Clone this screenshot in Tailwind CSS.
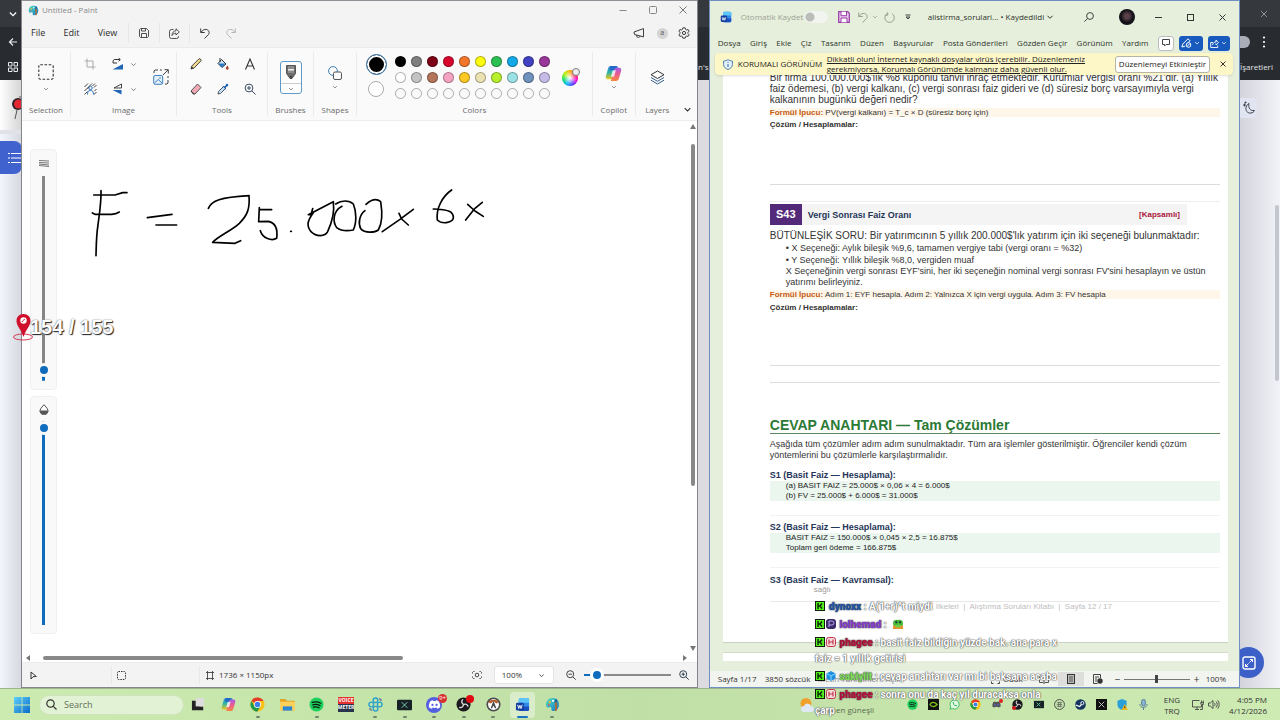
<!DOCTYPE html>
<html lang="tr">
<head>
<meta charset="utf-8">
<title>Untitled - Paint</title>
<script src="https://cdn.jsdelivr.net/npm/@tailwindcss/browser@4"></script>
</head>
<body class="h-screen flex flex-col overflow-hidden relative bg-[#f3f4f8] font-['Open_Sans','Noto_Sans',sans-serif] text-[8px] leading-[12px] text-[#3b3b3b]">

<svg class="absolute w-0 h-0" aria-hidden="true">
  <defs>
    <linearGradient id="gb" x1="0" y1="0" x2="1" y2="1"><stop offset="0" stop-color="#5fd0fa"/><stop offset="1" stop-color="#0a6cc9"/></linearGradient>
    <linearGradient id="gc1" x1="0" y1="0" x2="0" y2="1"><stop offset="0" stop-color="#2a7de1"/><stop offset=".5" stop-color="#2fb5a0"/><stop offset="1" stop-color="#f3c51c"/></linearGradient>
    <linearGradient id="gc2" x1="0" y1="0" x2="0" y2="1"><stop offset="0" stop-color="#a55be8"/><stop offset=".5" stop-color="#ee5a8b"/><stop offset="1" stop-color="#f48a3c"/></linearGradient>
    <linearGradient id="gp" x1="0" y1="0" x2="1" y2="1"><stop offset="0" stop-color="#4fe0b8"/><stop offset="1" stop-color="#1479cc"/></linearGradient>
    <symbol id="chev" viewBox="0 0 8 8"><path d="M1.5 2.8 4 5.3 6.5 2.8" fill="none" stroke="currentColor" stroke-width="1"/></symbol>
    <symbol id="copilot" viewBox="0 0 16 16"><path d="M5.5 1h5l-3.2 10.5c-.4 1.3-1 1.8-2.2 1.8H2.6C1 13.3.4 12 .8 10.600L3 3C3.500 1.600 4.200 1 5.500 1z" fill="url(#gc1)"/><path d="M10.500 15h-5l3.200-10.500c.4-1.300 1-1.800 2.200-1.800h2.500c1.600 0 2.200 1.300 1.800 2.700L13 13c-.5 1.400-1.200 2-2.500 2z" fill="url(#gc2)"/><path d="M7.200 5h3l-1.600 6h-3z" fill="#fff" opacity=".8"/><path d="M5.500 1h5c1.200 0 1.500.8 1.900 1.800-2.400-.4-3.300.4-3.900 2.200H4.200z" fill="#2468c8"/></symbol>
    <symbol id="word" viewBox="0 0 16 16"><rect x="4" y="1" width="11" height="14" rx="2" fill="#2f8bea"/><path d="M4 3a2 2 0 0 1 2-2h7a2 2 0 0 1 2 2v3H4z" fill="#5fc5f7"/><path d="M4 10h11v3a2 2 0 0 1-2 2H6a2 2 0 0 1-2-2z" fill="#1a4fc0"/><rect x="1" y="6" width="8.500" height="8.500" rx="1.500" fill="#123f9e"/><path d="m2.800 8.300 1.200 4 1.200-3.500 1.200 3.500 1.300-4" fill="none" stroke="#fff" stroke-width="1"/></symbol>
    <symbol id="paint" viewBox="0 0 16 16"><path d="M8 1C4 1 1 4 1 8c0 3 2 4 3.500 3 1.600-1 2.600 0 2.300 1.600C6.500 14.500 7.500 15 9 15c3.500 0 6-3.400 6-7.200C15 3.800 12 1 8 1z" fill="url(#gp)"/><circle cx="5" cy="5.500" r="1.200" fill="#ffb52e"/><circle cx="8.500" cy="4" r="1.200" fill="#fff"/><circle cx="4" cy="8.500" r="1" fill="#e8527a"/><path d="M10.500 5.500h2.500L12.700 15h-1.900z" fill="#a86b3c"/><path d="M10.300 5.500c0-2 .8-3 1.500-4 .8 1 1.400 2 1.400 4z" fill="#1b5e9e"/></symbol>
    <symbol id="chrome" viewBox="0 0 16 16"><circle cx="8" cy="8" r="7.500" fill="#fbc116"/><path d="M8 8 1.500 4.250A7.500 7.500 0 0 1 14.500 4.250L8 4.300z" fill="#e33b2e"/><path d="M1.500 4.250A7.500 7.500 0 0 0 8 15.500L11.200 9.900 4.800 9.900z" fill="#229a4c"/><circle cx="8" cy="8" r="3.700" fill="#fff"/><circle cx="8" cy="8" r="2.900" fill="#3f7de8"/></symbol>
    <symbol id="spotify" viewBox="0 0 16 16"><circle cx="8" cy="8" r="7.500" fill="#1ed05e"/><path d="M3.500 5.800c3-1 6.500-.7 9.200.8M4 8.400c2.600-.8 5.500-.5 7.800.8M4.500 10.800c2.200-.6 4.400-.4 6.300.7" fill="none" stroke="#0b1a10" stroke-width="1.300" stroke-linecap="round"/></symbol>
    <symbol id="discord" viewBox="0 0 16 16"><path d="M3.500 4.500C5 3.600 6 3.500 6.300 3.500l.4.700h2.600l.4-.7c.3 0 1.300.1 2.800 1 1.200 2 1.700 4.300 1.500 6.500-1 .9-2.200 1.300-3.200 1.500l-.7-1.200c-1.300.4-3 .4-4.200 0l-.7 1.200c-1-.2-2.200-.6-3.200-1.500-.2-2.200.3-4.500 1.500-6.500z" fill="currentColor"/><circle cx="5.800" cy="8.500" r="1.200" fill="#5560e0"/><circle cx="10.200" cy="8.500" r="1.200" fill="#5560e0"/></symbol>
    <symbol id="obs" viewBox="0 0 16 16"><circle cx="8" cy="8" r="7.500" fill="#1c1a1e"/><path d="M8 8c-2-1.500-2.500-3.500-1-5M8 8c2.300-.9 4.200-.2 4.700 1.800M8 8c-.3 2.500-2 3.700-4 3.200" fill="none" stroke="#d8d8d8" stroke-width="1.500" stroke-linecap="round"/></symbol>
    <symbol id="kick" viewBox="0 0 10 10"><rect width="10" height="10" fill="#101a10"/><rect x="1" y="1" width="8" height="8" fill="#53f01c"/><path d="M3 2v6M3 5h2M5 5l2-2.500M5 5l2 2.700" stroke="#0c200a" stroke-width="1.400" fill="none"/></symbol>
    <symbol id="ribbonbadge" viewBox="0 0 10 10"><rect x=".5" y=".5" width="9" height="9" rx="2" fill="#f8d9dc" stroke="#c0364a"/><path d="M3 2.500v5M7 2.500v5M3 5h4" stroke="#c0364a" stroke-width="1.200"/></symbol>
  </defs>
</svg>

<!-- Browser window behind everything -->
<div class="absolute inset-0 flex flex-col" aria-hidden="true">
  <div class="h-[27px] bg-[#35393e] flex items-center justify-between pl-2 pr-3 shrink-0">
    <svg class="w-[10px] h-[10px] text-white"><use href="#chev"/></svg>
    <svg class="w-[8px] h-[8px] text-[#8d9094]" viewBox="0 0 8 8"><path d="m1 1 6 6M7 1 1 7" stroke="currentColor" fill="none"/></svg>
  </div>
  <div class="h-[53px] bg-[#282c30] shrink-0 flex justify-between">
    <div class="w-[22px] flex flex-col items-center pl-1">
      <svg class="w-[10px] h-[10px] mt-[10px]" viewBox="0 0 10 10"><path d="M9 5H1.500M5 1.500 1.500 5 5 8.500" stroke="#e8eaed" stroke-width="1.200" fill="none"/></svg>
      <svg class="w-[10px] h-[10px] mt-[15px]" viewBox="0 0 10 10"><path d="M.5.500h3.500v3.500H.5zM6 .5h3.500v3.500H6zM.5 6h3.500v3.500H.5zM6 6h3.500v3.500H6z" stroke="#e8eaed" fill="none"/></svg>
    </div>
    <div class="flex-1 pl-[676px] pt-[34px] text-[#e3e5e8]">n's</div>
    <div class="w-[40px] text-[#e3e5e8] relative">
      <div class="absolute left-0 top-[9px] w-[10px] h-[12px] rounded-r-full bg-[#a9adb8]"></div>
      <svg class="absolute left-[22px] top-[8px] w-[4px] h-[14px]" viewBox="0 0 4 14"><circle cx="2" cy="2.500" r="1.100" fill="#fff"/><circle cx="2" cy="7" r="1.100" fill="#fff"/><circle cx="2" cy="11.500" r="1.100" fill="#fff"/></svg>
      <p class="absolute left-0 top-[34px]">İşaretleri</p>
    </div>
  </div>
  <div class="flex-1 flex justify-between bg-[#dcdce0]">
    <div class="w-[22px] bg-gradient-to-r from-[#f4f6fd] to-[#d5d7df] flex flex-col">
      <div class="h-[54px] bg-gradient-to-r from-white to-[#d4d4d4] border-b-4 border-[#e0e2e8] relative">
        <svg class="absolute left-[11px] top-[16px] w-[12px] h-[24px]" viewBox="0 0 12 24"><circle cx="7" cy="8" r="6" fill="#2d2428"/><circle cx="7.500" cy="8" r="4.500" fill="#e32634"/><path d="m6 14-2 9M9 2V0" stroke="#555"/></svg>
      </div>
      <div class="h-[33px] mt-[7px] bg-[#3f62ce] rounded-r-lg flex items-center justify-end pr-[1px]">
        <svg class="w-[13px] h-[12px]" viewBox="0 0 13 12"><path d="M0 1.500h2M3 1.500h10M0 6h2M3 6h10M0 10.500h2M3 10.500h10" stroke="#fff" stroke-width="1.100"/></svg>
      </div>
    </div>
    <div class="w-[40px] bg-gradient-to-r from-[#d4d5dc] to-[#f2f3f9] relative">
      <div class="absolute left-0 top-[18px] w-[17px] h-[20px] rounded-r bg-[#e1e5f2] flex items-center justify-center">
        <svg class="w-[14px] h-[14px]" viewBox="0 0 14 14"><path d="M7 2.500C6 7 8 10 12.500 9.500 11 12.500 7 13 4.800 10.500 3 8 4 4 7 2.500zM1 4h3M2.500 2.500v3M3.500 .5v2M2.500 1.500h2" stroke="#42454e" fill="none"/></svg>
      </div>
      <div class="absolute right-[1px] top-[125px] w-[4px] h-[176px] rounded bg-[#c3c5cf]"></div>
      <div class="absolute left-[-7px] top-[567px] w-[31px] h-[31px] rounded-full bg-[#3c60c8] flex items-center justify-center">
        <svg class="w-[14px] h-[14px]" viewBox="0 0 14 14"><rect x="1" y="1" width="12" height="12" rx="2" fill="none" stroke="#fff" stroke-width="1.400"/><path d="M8 3.500h2.500V6M6 10.500H3.500V8M10.500 3.500l-3 3M3.500 10.500l3-3" stroke="#fff" fill="none"/></svg>
      </div>
    </div>
  </div>
</div>

<!-- Windows side by side -->
<div class="relative flex-1 min-h-0 flex gap-[11px] pl-[21px] pr-[40px]">

  <!-- Paint -->
  <main class="flex-[677] min-w-0 flex flex-col border border-t-[#8f8f95] border-[#85858c] bg-[#f3f3f3]">
    <header class="h-[18px] flex items-center pl-[6px] pr-[10px] text-[#8a8a8a] shrink-0">
      <svg class="w-[11px] h-[11px] mr-[3px]"><use href="#paint"/></svg>
      <h1 class="flex-1">Untitled - Paint</h1>
      <div class="flex items-center gap-[22px]">
        <button aria-label="Minimize"><svg class="w-[8px] h-[8px]" viewBox="0 0 8 8"><path d="M.5 4.500h7" stroke="#888"/></svg></button>
        <button aria-label="Maximize"><svg class="w-[8px] h-[8px]" viewBox="0 0 8 8"><rect x=".5" y=".5" width="7" height="7" rx="1" fill="none" stroke="#888"/></svg></button>
        <button aria-label="Close"><svg class="w-[8px] h-[8px]" viewBox="0 0 8 8"><path d="m.5.500 7 7M7.500.500l-7 7" stroke="#777"/></svg></button>
      </div>
    </header>

    <nav class="h-[28px] flex items-center pl-[9px] pr-[7px] text-[9px] text-[#2b2b2b] shrink-0">
      <button class="w-[14px]">File</button>
      <button class="ml-[18px] w-[17px]">Edit</button>
      <button class="ml-[17px] w-[21px]">View</button>
      <span class="ml-[10px] w-px h-[20px] bg-[#e6e6e6]"></span>
      <button class="ml-[10px]" aria-label="Save"><svg class="w-[10px] h-[10px]" viewBox="0 0 10 10"><path d="M1.500.500h6l2 2v6l-1 1h-7l-1-1v-7zM2.500.500v2.500h4V.5M2.500 9.500V5.500h5v4" fill="none" stroke="#3c3c3c" stroke-width=".9"/></svg></button>
      <span class="ml-[10px] w-px h-[20px] bg-[#e6e6e6]"></span>
      <button class="ml-[9px]" aria-label="Share"><svg class="w-[11px] h-[11px]" viewBox="0 0 11 11"><path d="M4.500 1.500h-2a2 2 0 0 0-2 2v5a2 2 0 0 0 2 2h5a2 2 0 0 0 2-2V8M7 .8 10.300 4 7 7V5.200C5 5.200 3.800 6 3 7.500 3 4.800 4.500 3 7 2.700z" fill="none" stroke="#3c3c3c" stroke-width=".9"/></svg></button>
      <span class="ml-[9px] w-px h-[20px] bg-[#e6e6e6]"></span>
      <button class="ml-[10px]" aria-label="Undo"><svg class="w-[10px] h-[11px]" viewBox="0 0 10 11"><path d="M.7.500v4h4M.9 4.300C2.500 2.200 4.600 1 6.600 1.500c2.800.7 3.300 3.800 1.500 5.500L4.500 10.500" fill="none" stroke="#3c3c3c"/></svg></button>
      <button class="ml-[16px]" aria-label="Redo"><svg class="w-[10px] h-[11px] -scale-x-100" viewBox="0 0 10 11"><path d="M.7.500v4h4M.9 4.300C2.500 2.200 4.600 1 6.600 1.500c2.800.7 3.300 3.800 1.500 5.500L4.500 10.500" fill="none" stroke="#b5b5b5"/></svg></button>
      <span class="flex-1"></span>
      <button aria-label="Feedback"><svg class="w-[12px] h-[10px]" viewBox="0 0 12 10"><path d="M10.500.600v8.300L1.500 6.500 1 4zM3.500 7.200c0 1.500.7 2.200 1.800 2.200s1.700-.6 1.800-1.500" fill="none" stroke="#3c3c3c" stroke-linejoin="round"/></svg></button>
      <button class="ml-[12px] w-[11px] h-[11px] rounded-full bg-[#d4d4d4] text-[7px] leading-[10px] text-[#555]">a</button>
      <button class="ml-[10px]" aria-label="Settings"><svg class="w-[12px] h-[12px]" viewBox="0 0 12 12"><path d="M6 .8l1.200.1.400 1.500 1 .6 1.500-.5 1 1.700-1.100 1.100v1.300l1.100 1.100-1 1.700-1.500-.4-1 .6-.4 1.500H4.800l-.4-1.500-1-.6-1.500.4-1-1.700L2 6.600V5.300L.9 4.200l1-1.700 1.500.5 1-.6.400-1.500z" fill="none" stroke="#3c3c3c"/><circle cx="6" cy="6" r="1.600" fill="none" stroke="#3c3c3c"/></svg></button>
    </nav>

    <section class="h-[74px] flex bg-[#fafafa] border-t border-b border-[#ececec] text-[#6a6a6a] shrink-0 py-[4px]">
      <div class="w-[49px] flex flex-col items-center justify-between border-r border-[#ebebeb]">
        <button class="mt-[12px] flex flex-col items-center gap-[6px]" aria-label="Select"><svg class="w-[16px] h-[16px]" viewBox="0 0 16 16"><rect x=".8" y=".8" width="14.400" height="14.400" rx="1.500" fill="none" stroke="#333" stroke-width="1.100" stroke-dasharray="2.600 1.600"/></svg><svg class="w-[6px] h-[6px]"><use href="#chev"/></svg></button>
        <p>Selection</p>
      </div>
      <div class="w-[106px] flex flex-col items-center justify-between border-r border-[#ebebeb]">
        <div class="mt-[6px] pl-[6px] flex items-center gap-[16px]">
          <div class="grid grid-cols-[14px_auto] gap-x-[14px] gap-y-[13px] items-center">
            <button aria-label="Crop"><svg class="w-[12px] h-[12px]" viewBox="0 0 12 12"><path d="M3 .5v8.500h8.500M.5 3H9v8.500" fill="none" stroke="#aaa"/></svg></button>
            <button class="flex items-center gap-[6px]" aria-label="Rotate"><svg class="w-[12px] h-[12px]" viewBox="0 0 12 12"><path d="M11 6v5.500H.5z" fill="#1f66b5"/><path d="M1 5V4c0-1.500.7-2.500 2-2.500h5M6.500 0 8.300 1.600 6.500 3.300M1 5h4" fill="none" stroke="#333"/></svg><svg class="w-[7px] h-[7px]"><use href="#chev"/></svg></button>
            <button aria-label="Remove background"><svg class="w-[13px] h-[12px]" viewBox="0 0 13 12"><path d="M.5 4 4 .5M.5 8 8 .5M.5 11.500l3-3M8.500 3 11 .5M10 4.500l2.500-2.500M10.500 8l2-2M10 11.500l2.500-2.500M3.500 5.500l1.500-1.500" stroke="#444"/><path d="M3.500 11.500c0-3 1-4 3-4s3 1 3 4" fill="none" stroke="#2b6cb5"/><circle cx="6.500" cy="5" r="1.700" fill="none" stroke="#2b6cb5"/></svg></button>
            <button class="flex items-center gap-[6px]" aria-label="Flip"><svg class="w-[12px] h-[12px]" viewBox="0 0 12 12"><path d="M9.500 7v4.500L.5 7z" fill="#1f66b5"/><path d="M9.500 5V1L2 5z" fill="none" stroke="#444"/></svg><svg class="w-[7px] h-[7px]"><use href="#chev"/></svg></button>
          </div>
          <button aria-label="Resize"><svg class="w-[16px] h-[16px]" viewBox="0 0 16 16"><path d="M1 4V2l1-1h3M7 1h2M15 7v2M15 11v3l-1 1h-2M10 6l5-5M11.500.700h3.800v3.800" fill="none" stroke="#444"/><rect x=".7" y="6.500" width="9" height="8.800" rx="1.500" fill="#e6f1fb" stroke="#3b7fc0"/><path d="m1.500 14 3.700-3.500L9 14" fill="none" stroke="#3b7fc0"/><circle cx="7" cy="9" r=".8" fill="#3b7fc0"/></svg></button>
        </div>
        <p>Image</p>
      </div>
      <div class="w-[91px] flex flex-col items-center justify-between border-r border-[#ebebeb]">
        <div class="mt-[6px] pl-[2px] grid grid-cols-3 gap-x-[15px] gap-y-[13px]">
          <button aria-label="Pencil"><svg class="w-[12px] h-[12px]" viewBox="0 0 12 12"><path d="M1 11l.8-3L9 .8c1.200-.4 2.400.6 2 2L4 10.200z" fill="#f2d98d" stroke="#333" stroke-width=".9"/><path d="M1 11l.7-2.500L3.500 10z" fill="#333"/></svg></button>
          <button aria-label="Fill"><svg class="w-[12px] h-[12px]" viewBox="0 0 12 12"><path d="M4.500 1.500 9 6 5 9.500 1 5.500z" fill="#cfe3f5" stroke="#333"/><path d="M1 5.500h7.500L5 9.500z" fill="#2b78c2"/><path d="M3 0v4" stroke="#333"/><path d="M10.300 7.500c1 1.500 1.400 2 1.400 2.800a1.400 1.400 0 0 1-2.800 0c0-.8.500-1.300 1.400-2.800z" fill="#a5402a"/></svg></button>
          <button aria-label="Text"><svg class="w-[12px] h-[12px]" viewBox="0 0 12 12"><path d="M1.500 11.500 6 1l4.500 10.500M3 8h6" fill="none" stroke="#333" stroke-width="1.100"/></svg></button>
          <button aria-label="Eraser"><svg class="w-[12px] h-[12px]" viewBox="0 0 12 12"><path d="M1 8 7.500 1 11 4.500 5 11H3z" fill="#f3a9b6" stroke="#444" stroke-width=".9"/><path d="M1 8l3.500 3.200" stroke="#444"/></svg></button>
          <button aria-label="Color picker"><svg class="w-[12px] h-[12px]" viewBox="0 0 12 12"><path d="M1 11l.5-2.500L6.500 3.500l2 2-5 5z" fill="#bfe0fa" stroke="#333" stroke-width=".8"/><path d="M5.500 3 8 3.200 9.300 1c1.200-.8 2.500.4 1.800 1.700L8.800 4.500 9 6.700z" fill="#1e63b0"/></svg></button>
          <button aria-label="Magnifier"><svg class="w-[12px] h-[12px]" viewBox="0 0 12 12"><circle cx="5" cy="5" r="3.900" fill="none" stroke="#3a4d66"/><path d="m8 8 3.500 3.500M5 3v4M3 5h4" stroke="#3a4d66"/></svg></button>
        </div>
        <p>Tools</p>
      </div>
      <div class="w-[46px] flex flex-col items-center justify-between border-r border-[#ebebeb]">
        <button class="mt-[9px] w-[22px] h-[33px] rounded-[3px] border border-[#5b9acb] flex flex-col items-center justify-between pt-[3px] bg-[#fdfdfd]" aria-label="Brushes">
          <svg class="w-[10px] h-[15px]" viewBox="0 0 10 15"><path d="M.5.500h9v8L6 13.500H4L.5 8.500z" fill="#6b6b6b" stroke="#555"/><path d="M2 1v7h6V1z" fill="#8d8d8d"/><path d="M2 4h6v1.500H2z" fill="#eee"/><path d="M4.200 11h1.600L5 14.500z" fill="#222"/></svg>
          <span class="w-full border-t border-[#ccc] h-[10px] flex justify-center items-center"><svg class="w-[6px] h-[6px]"><use href="#chev"/></svg></span>
        </button>
        <p>Brushes</p>
      </div>
      <div class="w-[43px] flex flex-col items-center justify-between border-r border-[#ebebeb]">
        <button class="mt-[14px] flex flex-col items-center gap-[4px]" aria-label="Shapes"><svg class="w-[14px] h-[14px]" viewBox="0 0 14 14"><circle cx="5" cy="5" r="4.400" fill="none" stroke="#3b7fb5"/><rect x="5.500" y="6" width="8" height="7.500" rx="1.500" fill="#fafafa" stroke="#555"/></svg><svg class="w-[6px] h-[6px]"><use href="#chev"/></svg></button>
        <p>Shapes</p>
      </div>
      <div class="flex-1 min-w-0 flex flex-col items-center justify-between border-r border-[#ebebeb]">
        <div class="mt-[2px] pr-[3px] flex items-start">
          <div class="flex flex-col items-center gap-[6px]">
            <button class="w-[21px] h-[21px] rounded-full border border-[#3f7fb4] bg-black shadow-[inset_0_0_0_2px_white]" aria-label="Color 1"></button>
            <button class="w-[16px] h-[16px] rounded-full border border-[#aaa] bg-white" aria-label="Color 2"></button>
          </div>
          <div class="ml-[8px] mt-[2px] grid grid-cols-10 gap-[5px] *:size-[11px] *:rounded-full *:border *:border-black/30">
            <button class="bg-black" aria-label="Black"></button><button class="bg-[#7f7f7f]" aria-label="Gray"></button><button class="bg-[#7b0016]" aria-label="Dark red"></button><button class="bg-[#d8052c]" aria-label="Red"></button><button class="bg-[#f2762a]" aria-label="Orange"></button><button class="bg-[#fdfb10]" aria-label="Yellow"></button><button class="bg-[#2cc052]" aria-label="Green"></button><button class="bg-[#12a9e6]" aria-label="Turquoise"></button><button class="bg-[#4141c2]" aria-label="Indigo"></button><button class="bg-[#993699]" aria-label="Purple"></button>
            <button class="bg-white" aria-label="White"></button><button class="bg-[#c3c3c3]" aria-label="Light gray"></button><button class="bg-[#b3745a]" aria-label="Brown"></button><button class="bg-[#f5a3c3]" aria-label="Rose"></button><button class="bg-[#fcc823]" aria-label="Gold"></button><button class="bg-[#ebe3b2]" aria-label="Light yellow"></button><button class="bg-[#b7ef2b]" aria-label="Lime"></button><button class="bg-[#9be2e6]" aria-label="Light turquoise"></button><button class="bg-[#6f91bd]" aria-label="Blue gray"></button><button class="bg-[#c5bbe6]" aria-label="Lavender"></button>
            <button aria-label="Custom 1"></button><button aria-label="Custom 2"></button><button aria-label="Custom 3"></button><button aria-label="Custom 4"></button><button aria-label="Custom 5"></button><button aria-label="Custom 6"></button><button aria-label="Custom 7"></button><button aria-label="Custom 8"></button><button aria-label="Custom 9"></button><button aria-label="Custom 10"></button>
          </div>
          <button class="ml-[12px] mt-[14px] w-[18px] h-[18px] relative" aria-label="Edit colors">
            <span class="absolute left-0 bottom-0 w-[16px] h-[16px] rounded-full bg-[radial-gradient(circle,white,transparent_65%),conic-gradient(#ffb000,#ff2020,#ff00d0,#5030ff,#00b0ff,#00e060,#b0f000,#ffb000)]"></span>
            <span class="absolute right-0 top-0 w-[8px] h-[8px] rounded-full border border-[#777] bg-[#eee]"></span>
          </button>
        </div>
        <p>Colors</p>
      </div>
      <div class="w-[43px] flex flex-col items-center justify-between border-r border-[#ebebeb]">
        <button class="mt-[13px] flex flex-col items-center gap-[2px]" aria-label="Copilot"><svg class="w-[17px] h-[17px]"><use href="#copilot"/></svg><svg class="w-[6px] h-[6px]"><use href="#chev"/></svg></button>
        <p>Copilot</p>
      </div>
      <div class="w-[43px] flex flex-col items-center justify-between">
        <button class="mt-[18px]" aria-label="Layers"><svg class="w-[15px] h-[15px]" viewBox="0 0 15 15"><path d="M7.500 1 14 4.700 7.500 8.500 1 4.700z" fill="#fff" stroke="#333" stroke-linejoin="round"/><path d="m1 7.500 6.500 3.800L14 7.500M1 10.200 7.500 14 14 10.200" fill="none" stroke="#34608f" stroke-linejoin="round"/></svg></button>
        <p>Layers</p>
      </div>
      <button class="w-[18px] self-end pb-[2px] flex justify-center text-[#333]" aria-label="Collapse ribbon"><svg class="w-[9px] h-[9px]"><use href="#chev"/></svg></button>
    </section>

    <div class="flex-1 min-h-0 flex bg-white">
      <div class="w-[35px] pl-[8px] pt-[28px] pb-[20px] flex flex-col gap-[6px] shrink-0">
        <div class="flex-1 w-[27px] rounded-[4px] border border-[#f0f0f0] bg-[#f9f9f9] flex flex-col items-center pt-[9px] pb-[8px]">
          <svg class="w-[10px] h-[8px] shrink-0" viewBox="0 0 10 8"><path d="M0 1.500l10 .5M0 3.500l10 .5M0 5l10 1M0 6.500l10 1" stroke="#555" stroke-width=".8"/></svg>
          <input type="range" min="0" max="100" value="2" aria-label="Brush size" class="mt-[9px] flex-1 min-h-0 w-[14px] appearance-none [writing-mode:vertical-lr] [direction:rtl] bg-[linear-gradient(#858585_97%,#0f6cbd_97%)] bg-[length:3px_100%] bg-center bg-no-repeat [&::-webkit-slider-thumb]:appearance-none [&::-webkit-slider-thumb]:w-[14px] [&::-webkit-slider-thumb]:h-[14px] [&::-webkit-slider-thumb]:rounded-full [&::-webkit-slider-thumb]:border-[3px] [&::-webkit-slider-thumb]:border-[#f9f9f9] [&::-webkit-slider-thumb]:bg-[#0f6cbd]">
        </div>
        <div class="flex-1 w-[27px] rounded-[4px] border border-[#f0f0f0] bg-[#f9f9f9] flex flex-col items-center pt-[7px] pb-[8px]">
          <svg class="w-[10px] h-[11px] shrink-0" viewBox="0 0 10 11"><path d="M5 .7 8 4.200a4 4 0 1 1-6 0z" fill="#fff" stroke="#555"/><path d="M1 6.500h8a4 4 0 0 1-8 0z" fill="#555"/></svg>
          <input type="range" min="0" max="100" value="100" aria-label="Opacity" class="mt-[6px] flex-1 min-h-0 w-[14px] appearance-none [writing-mode:vertical-lr] [direction:rtl] bg-[linear-gradient(#0f6cbd,#0f6cbd)] bg-[length:3px_100%] bg-center bg-no-repeat [&::-webkit-slider-thumb]:appearance-none [&::-webkit-slider-thumb]:w-[14px] [&::-webkit-slider-thumb]:h-[14px] [&::-webkit-slider-thumb]:rounded-full [&::-webkit-slider-thumb]:border-[3px] [&::-webkit-slider-thumb]:border-[#f9f9f9] [&::-webkit-slider-thumb]:bg-[#0f6cbd]">
        </div>
      </div>
      <div class="flex-1 min-w-0 overflow-hidden">
        <svg class="w-[600px] h-[180px]" viewBox="57 121 600 180" role="img" aria-label="F = 25.000 x 6 x">
          <g fill="none" stroke="#000" stroke-width="5" stroke-linecap="round" stroke-linejoin="round">
            <g transform="translate(0 130) scale(.3333)">
              <path d="M303 182C304 220 298 250 294 285C289 315 289 340 288 377M281 195H345L368 188L381 188M277 249L285 253H335L347 251L358 246M442 263L516 253M468 285H530"/>
            </g>
            <g transform="translate(200 170) scale(.3333)">
              <path d="M25 115C35 92 60 82 147 77C150 115 143 135 118 160C95 182 55 198 38 217L105 220L122 212"/>
              <path d="M215 119H178V113L176 155L205 154C225 158 234 175 230 205C215 214 188 205 181 182M272 184h2"/>
              <path d="M338 116L333 134L325 134L400 95C404 125 397 155 383 185C375 200 350 202 333 185C320 168 320 155 340 128"/>
              <path d="M426 109C398 124 398 155 410 173C425 184 445 183 460 180C470 160 470 125 460 102C447 90 425 90 407 102"/>
              <path d="M495 122C478 135 474 160 482 176C495 191 525 188 535 180C547 160 547 125 542 95C530 85 515 88 498 103"/>
              <path d="M547 185L600 148L640 118M597 130L605 147L625 165M755 60C725 80 708 118 712 150C725 163 755 160 760 145C762 125 745 118 700 117M797 150L825 115L847 97M803 103L825 123L850 139"/>
            </g>
          </g>
        </svg>
      </div>
      <div class="w-[7px] flex flex-col items-center py-[3px] shrink-0">
        <svg class="w-[6px] h-[5px]" viewBox="0 0 6 5"><path d="M3 0l3 5H0z" fill="#777"/></svg>
        <div class="mt-[15px] w-[4px] h-[342px] rounded bg-[#888]"></div>
        <div class="flex-1"></div>
        <svg class="w-[6px] h-[5px]" viewBox="0 0 6 5"><path d="M3 5l3-5H0z" fill="#777"/></svg>
      </div>
    </div>
    <div class="h-[8px] flex items-center bg-white px-[4px] shrink-0">
      <svg class="w-[4px] h-[6px]" viewBox="0 0 4 6"><path d="M0 3l4-3v6z" fill="#777"/></svg>
      <div class="ml-[13px] w-[54%] h-[4px] rounded bg-[#888]"></div>
      <div class="flex-1"></div>
      <svg class="w-[4px] h-[6px] mr-[6px]" viewBox="0 0 4 6"><path d="M4 3L0 0v6z" fill="#777"/></svg>
    </div>
    <footer class="h-[25px] flex items-center pl-[8px] pr-[8px] bg-[#f3f3f3] border-t border-[#ececec] shrink-0">
      <svg class="w-[7px] h-[9px]" viewBox="0 0 7 9"><path d="M1 1v7l2-2.300 3.300-.2z" fill="none" stroke="#333"/></svg>
      <span class="ml-[74px] w-px h-[18px] bg-[#e8e8e8]"></span>
      <svg class="ml-[5px] w-[9px] h-[9px]" viewBox="0 0 9 9"><rect x=".5" y=".5" width="8" height="8" rx="1" fill="none" stroke="#333" stroke-dasharray="1.500 1"/></svg>
      <span class="ml-[73px] w-px h-[18px] bg-[#e8e8e8]"></span>
      <svg class="ml-[6px] w-[8px] h-[9px]" viewBox="0 0 8 9"><path d="M1.500 0v9M6.500 0v9M0 1.500h8M0 7.500h8" stroke="#444" fill="none" stroke-width=".9"/></svg>
      <p class="ml-[5px] text-[#333]">1736 × 1150px</p>
      <span class="flex-1"></span>
      <button aria-label="Fit to window"><svg class="w-[10px] h-[8px]" viewBox="0 0 10 8"><path d="M.5 2.500v-1l1-1h1M7.500.500h1l1 1v1M9.500 5.500v1l-1 1h-1M2.500 7.500h-1l-1-1v-1" fill="none" stroke="#444"/><circle cx="5" cy="4" r="1.800" fill="none" stroke="#444"/></svg></button>
      <div class="relative ml-[12px] flex items-center">
        <select aria-label="Zoom" class="appearance-none w-[60px] h-[18px] rounded-[3px] border border-[#e4e4e4] bg-white pl-[7px] text-[8px] text-[#333]"><option>100%</option></select>
        <svg class="absolute right-[9px] w-[7px] h-[7px] pointer-events-none"><use href="#chev"/></svg>
      </div>
      <button class="ml-[12px]" aria-label="Zoom out"><svg class="w-[10px] h-[10px]" viewBox="0 0 10 10"><circle cx="4.200" cy="4.200" r="3.500" fill="none" stroke="#444"/><path d="m7 7 2.700 2.700M2.500 4.200h3.400" stroke="#444"/></svg></button>
      <input type="range" min="0" max="100" value="8" aria-label="Zoom level" class="ml-[8px] w-[87px] h-[14px] appearance-none bg-[linear-gradient(90deg,#0f6cbd_10%,#8a8a8a_10%)] bg-[length:100%_2px] bg-center bg-no-repeat [&::-webkit-slider-thumb]:appearance-none [&::-webkit-slider-thumb]:w-[14px] [&::-webkit-slider-thumb]:h-[14px] [&::-webkit-slider-thumb]:rounded-full [&::-webkit-slider-thumb]:border-[3px] [&::-webkit-slider-thumb]:border-white [&::-webkit-slider-thumb]:bg-[#0f6cbd]">
      <button class="ml-[8px]" aria-label="Zoom in"><svg class="w-[10px] h-[10px]" viewBox="0 0 10 10"><circle cx="4.200" cy="4.200" r="3.500" fill="none" stroke="#345"/><path d="m7 7 2.700 2.700M2.500 4.200h3.400M4.200 2.500v3.400" stroke="#345"/></svg></button>
    </footer>
  </main>

  <!-- Word -->
  <article class="flex-[531] min-w-0 flex flex-col border border-[#6f8fc0] bg-[#e5efdb]">
    <header class="h-[32px] flex items-center pl-[10px] pr-[13px] shrink-0">
      <svg class="w-[12px] h-[12px]"><use href="#word"/></svg>
      <label class="ml-[9px] flex items-center text-[#9da298] whitespace-nowrap"><span class="w-[57px]">Otomatik Kaydet</span>
        <input type="checkbox" role="switch" class="ml-[6px] appearance-none w-[24px] h-[12px] rounded-full bg-[#f2f4ef] bg-[radial-gradient(circle_at_6px_6px,#bbbdb8_4px,transparent_5px)]"></label>
      <button class="ml-[10px]" aria-label="Kaydet"><svg class="w-[12px] h-[12px]" viewBox="0 0 12 12"><path d="M.700.700h9l1.600 1.600v9H.700z" fill="#e9c8ee" stroke="#9a3ba8" stroke-width="1.200"/><path d="M3 .7v4h5.500v-4M3 11.300V7h6v4.300" fill="#fff" stroke="#9a3ba8"/></svg></button>
      <button class="ml-[8px] flex items-center gap-[4px] text-[#98a092]" aria-label="Geri al"><svg class="w-[10px] h-[11px]" viewBox="0 0 10 11"><path d="M.7.500v4h4M.9 4.300C2.500 2.200 4.600 1 6.600 1.500c2.800.7 3.300 3.800 1.500 5.500L4.500 10.500" fill="none" stroke="#98a092"/></svg><svg class="w-[6px] h-[6px]"><use href="#chev"/></svg></button>
      <button class="ml-[6px]" aria-label="Yinele"><svg class="w-[11px] h-[11px]" viewBox="0 0 11 11"><path d="M3.500 1.500A4.700 4.700 0 1 0 8 1.700M3.700.200v3H.800" fill="none" stroke="#98a092"/></svg></button>
      <button class="ml-[10px]" aria-label="Özelleştir"><svg class="w-[6px] h-[6px]" viewBox="0 0 6 6"><path d="M.5 1h5M1 3l2 2 2-2z" stroke="#444" fill="none"/></svg></button>
      <button class="ml-[17px] flex items-center gap-[2px] text-[#2f332c] whitespace-nowrap"><span>alistirma_sorulari... • Kaydedildi</span><svg class="w-[8px] h-[8px]"><use href="#chev"/></svg></button>
      <span class="flex-1"></span>
      <button aria-label="Ara"><svg class="w-[10px] h-[10px]" viewBox="0 0 10 10"><circle cx="6" cy="4" r="3.400" fill="none" stroke="#444"/><path d="M3.500 6.500.3 9.700" stroke="#444"/></svg></button>
      <button class="ml-[25px] w-[16px] h-[16px] rounded-full bg-[radial-gradient(circle_at_50%_45%,#5a4048_20%,#15131a_50%)]" aria-label="Hesap"></button>
      <button class="ml-[20px]" aria-label="Simge durumuna küçült"><svg class="w-[7px] h-[7px]" viewBox="0 0 7 7"><path d="M0 3.500h7" stroke="#333"/></svg></button>
      <button class="ml-[25px]" aria-label="Ekranı kapla"><svg class="w-[7px] h-[7px]" viewBox="0 0 7 7"><rect x=".5" y=".5" width="6" height="6" fill="none" stroke="#333"/></svg></button>
      <button class="ml-[25px]" aria-label="Kapat"><svg class="w-[7px] h-[7px]" viewBox="0 0 7 7"><path d="m.5.500 6 6M6.500.500l-6 6" stroke="#333"/></svg></button>
    </header>
    <nav class="h-[20px] flex items-center justify-between pl-[8px] pr-[9px] text-[#2f332c] whitespace-nowrap shrink-0">
      <button>Dosya</button><button>Giriş</button><button>Ekle</button><button>Çiz</button><button>Tasarım</button><button>Düzen</button><button>Başvurular</button><button>Posta Gönderileri</button><button>Gözden Geçir</button><button>Görünüm</button><button>Yardım</button>
      <span class="flex gap-[5px]">
        <button class="w-[16px] h-[15px] rounded-[3px] border border-[#bbb] bg-white flex items-center justify-center" aria-label="Açıklamalar"><svg class="w-[8px] h-[8px]" viewBox="0 0 8 8"><path d="M.5.500h7v5H4L2.500 7V5.500h-2z" fill="none" stroke="#444"/></svg></button>
        <button class="w-[24px] h-[15px] rounded-[3px] bg-[#185abd] text-white flex items-center justify-center gap-[2px]" aria-label="Görüntüleme"><svg class="w-[11px] h-[10px]" viewBox="0 0 11 10"><path d="m.8 9 1-3L7 .800l2 2-2 2M1 9l3-.8" fill="none" stroke="#fff"/><circle cx="7.500" cy="7" r="2.300" fill="none" stroke="#fff"/><path d="m6 8.500 3-3" stroke="#fff"/></svg><svg class="w-[6px] h-[6px]"><use href="#chev"/></svg></button>
        <button class="w-[22px] h-[15px] rounded-[3px] bg-[#185abd] text-white flex items-center justify-center gap-[2px]" aria-label="Paylaş"><svg class="w-[9px] h-[9px]" viewBox="0 0 9 9"><path d="M3 3.500H.700v5h7v-2M2.500 6C3 4 4 3 6 3V1l2.500 2.700L6 6V4.500" fill="none" stroke="#fff" stroke-width=".9"/></svg><svg class="w-[6px] h-[6px]"><use href="#chev"/></svg></button>
      </span>
    </nav>
    <div class="h-[22px] ml-[5px] mr-[6px] rounded-[4px] bg-[#fdf7c8] shadow-sm flex items-center pl-[8px] pr-[7px] text-[#222] shrink-0 whitespace-nowrap z-10">
      <svg class="w-[10px] h-[11px]" viewBox="0 0 10 11"><path d="M5 .6C6.300 1.600 7.800 2 9.400 2v3.500c0 2.300-1.700 4-4.400 5-2.700-1-4.400-2.700-4.400-5V2C2.200 2 3.700 1.600 5 .6z" fill="#e6f1fb" stroke="#4a84b8"/><path d="M5 3v1M5 5v3" stroke="#2d6aa6"/></svg>
      <strong class="ml-[5px] w-[83px] font-normal">KORUMALI GÖRÜNÜM</strong>
      <a href="#" class="ml-[6px] underline leading-[10px]">Dikkatli olun! İnternet kaynaklı dosyalar virüs içerebilir. Düzenlemeniz<br>gerekmiyorsa, Korumalı Görünümde kalmanız daha güvenli olur.</a>
      <span class="flex-1"></span>
      <button class="w-[95px] h-[17px] rounded-[3px] border border-[#b5b5a5] bg-white">Düzenlemeyi Etkinleştir</button>
      <button class="ml-[10px]" aria-label="Kapat"><svg class="w-[6px] h-[6px]" viewBox="0 0 6 6"><path d="m.5.500 5 5M5.500.500l-5 5" stroke="#333"/></svg></button>
    </div>

    <div class="flex-1 min-h-0 flex flex-col pl-[13px] pr-[11px] overflow-hidden">
      <div class="h-[568px] shrink-0 bg-white border-b border-[#c9d2c0] pl-[47px] pr-[8px] font-['Liberation_Sans',Arial,sans-serif] text-[#333] text-[8px] whitespace-nowrap overflow-hidden">
        <p class="-mt-[3px] text-[10px] leading-[11px]">Bir firma 100.000.000$'lık %8 kuponlu tahvil ihraç etmektedir. Kurumlar vergisi oranı %21'dir. (a) Yıllık<br>faiz ödemesi, (b) vergi kalkanı, (c) vergi sonrası faiz gideri ve (d) süresiz borç varsayımıyla vergi<br>kalkanının bugünkü değeri nedir?</p>
        <p class="mt-[3px] leading-[9px] bg-[#fef6e9]"><b class="text-[#c55a11]">Formül İpucu:</b> PV(vergi kalkanı) = T_c × D (süresiz borç için)</p>
        <p class="mt-[3px] leading-[9px] font-bold">Çözüm / Hesaplamalar:</p>
        <hr class="mt-[55px] border-[#dcdcdc]">
        <hr class="mt-[16px] border-[#eeeeee]">
        <div class="mt-[2px] mr-[33px] h-[21px] flex items-center bg-[#f4f4f5]">
          <b class="w-[32px] self-stretch bg-[#532a7a] text-white text-[11px] leading-[21px] text-center">S43</b>
          <h2 class="ml-[6px] flex-1 font-bold text-[9px] text-[#1f3658]">Vergi Sonrası Faiz Oranı</h2>
          <b class="mr-[7px] text-[#a8153a]">[Kapsamlı]</b>
        </div>
        <p class="mt-[5px] text-[10px] leading-[12px]">BÜTÜNLEŞİK SORU: Bir yatırımcının 5 yıllık 200.000$'lık yatırım için iki seçeneği bulunmaktadır:</p>
        <ul class="ml-[16px] text-[9px] leading-[12px]"><li>• X Seçeneği: Aylık bileşik %9,6, tamamen vergiye tabi (vergi oranı = %32)</li><li>• Y Seçeneği: Yıllık bileşik %8,0, vergiden muaf</li></ul>
        <p class="ml-[16px] text-[9px] leading-[11px]">X Seçeneğinin vergi sonrası EYF'sini, her iki seçeneğin nominal vergi sonrası FV'sini hesaplayın ve üstün<br>yatırımı belirleyiniz.</p>
        <p class="mt-[2px] leading-[9px] bg-[#fef6e9]"><b class="text-[#c55a11]">Formül İpucu:</b> Adım 1: EYF hesapla. Adım 2: Yalnızca X için vergi uygula. Adım 3: FV hesapla</p>
        <p class="mt-[4px] leading-[9px] font-bold">Çözüm / Hesaplamalar:</p>
        <hr class="mt-[53px] border-[#dcdcdc]">
        <hr class="mt-[16px] border-[#dcdcdc]">
        <h2 class="mt-[34px] text-[14px] leading-[16px] font-bold text-[#2b7a35] border-b border-[#5c8a60]">CEVAP ANAHTARI — Tam Çözümler</h2>
        <p class="mt-[5px] text-[9px] leading-[11px]">Aşağıda tüm çözümler adım adım sunulmaktadır. Tüm ara işlemler gösterilmiştir. Öğrenciler kendi çözüm<br>yöntemlerini bu çözümlerle karşılaştırmalıdır.</p>
        <h3 class="mt-[8px] text-[9px] leading-[12px] font-bold text-[#1f3658]">S1 (Basit Faiz — Hesaplama):</h3>
        <p class="pl-[16px] leading-[10px] bg-[#eaf6ee] text-[#222]">(a) BASIT FAIZ = 25.000$ × 0,06 × 4 = 6.000$<br>(b) FV = 25.000$ + 6.000$ = 31.000$</p>
        <hr class="mt-[14px] border-[#f3f3f3]">
        <h3 class="mt-[5px] text-[9px] leading-[12px] font-bold text-[#1f3658]">S2 (Basit Faiz — Hesaplama):</h3>
        <p class="pl-[16px] leading-[10px] bg-[#eaf6ee] text-[#222]">BASIT FAIZ = 150.000$ × 0,045 × 2,5 = 16.875$<br>Toplam geri ödeme = 166.875$</p>
        <hr class="mt-[14px] border-[#f3f3f3]">
        <h3 class="mt-[6px] text-[9px] leading-[12px] font-bold text-[#1f3658]">S3 (Basit Faiz — Kavramsal):</h3>
        <p class="pl-[44px] leading-[8px] text-[#999]">sağlı</p>
        <hr class="mt-[7px] border-[#e8e8e8]">
        <p class="pr-[108px] text-right leading-[10px] text-[#bdbdbd]">İlkeleri &nbsp;|&nbsp; Alıştırma Soruları Kitabı &nbsp;|&nbsp; Sayfa 12 / 17</p>
      </div>
      <div class="mt-[9px] h-[9px] shrink-0 bg-white border-t border-[#d3dbcb]"></div>
    </div>
    <footer class="h-[16px] flex items-center pl-[8px] pr-[13px] bg-[#f2f4f0] text-[#333] whitespace-nowrap shrink-0">
      <span class="w-[47px]">Sayfa 1/17</span><span class="w-[53px]">3850 sözcük</span><span class="text-[#888]">Metin Tahminleri: Açık</span>
      <span class="flex-1"></span>
      <button class="flex items-center gap-[3px]"><svg class="w-[9px] h-[9px]" viewBox="0 0 9 9"><path d="M.5 2.500v-2h2M6.500.500h2v2M8.500 6.500v2h-2M2.500 8.500h-2v-2" fill="none" stroke="#444"/></svg>Odak</button>
      <button class="ml-[16px]" aria-label="Okuma modu"><svg class="w-[10px] h-[9px]" viewBox="0 0 10 9"><path d="M5 1.500v7M.5.500H4l1 1 1-1h3.500v7H6l-1 1-1-1H.5z" fill="none" stroke="#555"/></svg></button>
      <button class="ml-[9px] w-[26px] h-[14px] bg-[#dedfdc] flex items-center justify-center" aria-label="Sayfa düzeni"><svg class="w-[8px] h-[10px]" viewBox="0 0 8 10"><rect x=".5" y=".5" width="7" height="9" fill="#bbb" stroke="#333"/><path d="M2 3h4M2 5h4M2 7h4" stroke="#555"/></svg></button>
      <button class="ml-[9px]" aria-label="Web düzeni"><svg class="w-[10px] h-[10px]" viewBox="0 0 10 10"><path d="M7.500 4V.500h-7v9h4M2 3h4M2 5h2M2 7h2" fill="none" stroke="#444"/><circle cx="7" cy="7" r="2.700" fill="#333"/></svg></button>
      <button class="ml-[12px] w-[6px] text-[10px]" aria-label="Uzaklaştır">−</button>
      <input type="range" min="0" max="100" value="50" aria-label="Yakınlaştırma" class="ml-[3px] w-[66px] h-[9px] appearance-none bg-[linear-gradient(#777,#777)] bg-[length:100%_1px] bg-center bg-no-repeat [&::-webkit-slider-thumb]:appearance-none [&::-webkit-slider-thumb]:w-[3px] [&::-webkit-slider-thumb]:h-[8px] [&::-webkit-slider-thumb]:bg-[#444]">
      <button class="ml-[4px] w-[6px] text-[10px]" aria-label="Yakınlaştır">+</button>
      <span class="ml-[6px]">100%</span>
    </footer>
  </article>
</div>

<!-- Taskbar -->
<footer class="relative h-[32px] shrink-0 flex items-center pl-[14px] pr-[13px] bg-gradient-to-r from-[#ccebb0] via-[#c0dfa6] to-[#cdebb3] border-t border-[#9db48c] text-[#333]">
  <button aria-label="Start"><svg class="w-[16px] h-[16px]" viewBox="0 0 16 16"><path d="M0 0h7.600v7.600H0zM8.400 0H16v7.600H8.400zM0 8.400h7.600V16H0zM8.400 8.400H16V16H8.400z" fill="url(#gb)"/></svg></button>
  <label class="ml-[9px] w-[145px] h-[20px] rounded-full bg-[#e2f2d4] border border-[#cfe3bd] flex items-center pl-[6px] gap-[7px]">
    <svg class="w-[11px] h-[11px] shrink-0" viewBox="0 0 11 11"><circle cx="4.500" cy="4.500" r="3.700" fill="none" stroke="#333" stroke-width="1.200"/><path d="m7.300 7.300 3.200 3.200" stroke="#333" stroke-width="1.200"/></svg>
    <input type="text" placeholder="Search" aria-label="Search" class="w-[100px] bg-transparent text-[9px] placeholder:text-[#65705c] outline-none">
  </label>
  <div class="w-[383px] grid grid-cols-13 justify-items-center *:w-[25px] *:h-[26px] *:flex *:justify-center *:items-center [&_svg]:size-[15px]">
    <button aria-label="Task view"><svg viewBox="0 0 16 16"><path d="M1 4h8v6h4v4H1z" fill="#222"/><rect x="5" y="1" width="9" height="9" fill="#ddd"/></svg></button>
    <button aria-label="Copilot"><svg><use href="#copilot"/></svg></button>
    <button aria-label="Chrome"><svg><use href="#chrome"/></svg></button>
    <button aria-label="Explorer"><svg viewBox="0 0 16 16"><path d="M0 2h6l1.500 2H16v10H0z" fill="#e2a427"/><path d="M0 5h16v9.500H0z" fill="#fbd05c"/><path d="M3 10h10v4.500H3z" fill="#2a87d6"/></svg></button>
    <button aria-label="Spotify"><svg><use href="#spotify"/></svg></button>
    <button aria-label="Voicemeeter"><span class="w-[16px] h-[15px] bg-gradient-to-b from-[#e5322f] from-50% to-[#28344c] to-50% text-white text-[5px] leading-[7px] font-bold flex flex-col items-center overflow-hidden"><span>VOICE</span><span>METER</span></span></button>
    <button aria-label="Network tool"><svg viewBox="0 0 16 16"><g fill="none" stroke="#2da3c9" stroke-width="1.500"><circle cx="8" cy="3.500" r="2.500"/><circle cx="8" cy="12.500" r="2.500"/><circle cx="3.500" cy="8" r="2.500"/><circle cx="12.500" cy="8" r="2.500"/></g><path d="M12 1.500l2.500 2.500M1.500 12l2.500 2.500" stroke="#7d8aa0" stroke-width="2"/></svg></button>
    <button aria-label="Monitor tool"><svg viewBox="0 0 16 16"><rect x="0" y="3" width="16" height="11" rx="1" fill="#172226"/><path d="m5 5.500 6 6M11 5.500l-6 6" stroke="#7fd9b4"/></svg></button>
    <button aria-label="Discord" class="relative"><span class="w-[16px] h-[16px] rounded-full bg-[#5560e0] text-white flex items-center justify-center"><svg><use href="#discord"/></svg></span><span class="absolute top-[2px] right-0 rounded-full bg-[#d63031] text-white text-[6px] leading-[9px] px-[1px]">9+</span></button>
    <button aria-label="OBS" class="relative"><svg><use href="#obs"/></svg><span class="absolute top-[3px] right-[2px] w-[8px] h-[8px] rounded-full bg-[#e00b12]"></span></button>
    <button aria-label="Overwatch"><svg viewBox="0 0 16 16"><circle cx="8" cy="8" r="7.500" fill="#4b4a4c"/><circle cx="8" cy="8" r="5.800" fill="#fff"/><path d="M2.500 5.500C4 2 12 2 13.500 5.500L11 7 8 4.500 5 7z" fill="#b75a2a"/><path d="M8 4 5 12h1.500L8 9l1.500 3H11z" fill="#444"/></svg></button>
    <button aria-label="Word" class="rounded bg-white/40 relative"><svg><use href="#word"/></svg><span class="absolute bottom-0 left-[7px] w-[11px] h-[2px] rounded bg-[#1673c4]"></span></button>
    <button aria-label="Paint"><svg><use href="#paint"/></svg></button>
  </div>
  <!-- Running-app markers under the taskbar icons -->
  <div class="absolute left-[184px] bottom-[2px] w-[383px] grid grid-cols-13 *:flex *:justify-center [&_i]:w-[4px] [&_i]:h-[2px] [&_i]:rounded [&_i]:bg-[#77846d]" aria-hidden="true">
    <span></span><span></span><span><i></i></span><span></span><span><i></i></span><span></span><span><i></i></span><span><i></i></span><span><i></i></span><span><i></i></span><span><i></i></span><span></span><span><i></i></span>
  </div>
  <span class="flex-1"></span>
  <div class="flex items-center gap-[3px] text-[#5b6a4e] whitespace-nowrap">
    <svg class="w-[16px] h-[16px]" viewBox="0 0 16 16"><circle cx="7" cy="6.500" r="5.500" fill="#f0a02c"/><path d="M5 15a3 3 0 0 1 0-6 4 4 0 0 1 7.500.5A2.800 2.800 0 0 1 13 15z" fill="#dfe8f5"/></svg>
    <span class="pt-[10px]">Kısmen güneşli</span>
  </div>
  <div class="ml-[28px] flex items-center *:w-[21px] *:flex *:justify-center [&_svg]:size-[11px]">
    <button aria-label="Spotify"><svg><use href="#spotify"/></svg></button>
    <button aria-label="Nvidia"><svg viewBox="0 0 12 12"><rect width="12" height="12" fill="#111"/><path d="M2 6c2-3 5-3 8 0-3 3-6 3-8 0z" fill="none" stroke="#7bc315" stroke-width="1.300"/></svg></button>
    <button aria-label="WhatsApp"><svg viewBox="0 0 12 12"><path d="M1 11l.8-2.500a5 5 0 1 1 2 1.900z" fill="#e2f7e4" stroke="#35b955"/><path d="M4 3.500c0 2.500 2 4.500 4.500 4.500l.3-1-1.500-.8-.8.6-1.300-1.300.5-.8L5 3.300z" fill="#35b955"/></svg></button>
    <button aria-label="Chrome"><svg><use href="#chrome"/></svg></button>
    <button aria-label="Discord" class="text-[#555] relative"><svg><use href="#discord"/></svg><span class="absolute top-0 right-[4px] w-[4px] h-[4px] rounded-full bg-[#e02424]"></span></button>
    <button aria-label="OBS" class="relative"><svg><use href="#obs"/></svg><span class="absolute bottom-0 left-[5px] w-[4px] h-[4px] rounded-full bg-[#d01818]"></span></button>
    <button aria-label="Monitor tool"><svg viewBox="0 0 12 12"><rect x="1" y="2" width="11" height="8" fill="#172226"/><path d="m4 4 4 4M8 4l-4 4" stroke="#5fc59a"/></svg></button>
    <button aria-label="Razer"><svg viewBox="0 0 12 12"><circle cx="6" cy="6" r="5.400" fill="none" stroke="#444"/><path d="M3 4h6M3 6h6M3 8h6M5 3v6M7 3v6" stroke="#555" stroke-width=".7"/></svg></button>
    <button aria-label="Steam"><svg viewBox="0 0 12 12"><circle cx="6" cy="6" r="5.800" fill="#14355e"/><circle cx="8" cy="4.500" r="1.700" fill="none" stroke="#fff"/><path d="M.8 6.500 5 8.300 7 6" stroke="#fff" stroke-width="1.300" fill="none"/></svg></button>
    <button aria-label="X"><svg viewBox="0 0 12 12"><rect width="12" height="12" fill="#111"/><path d="m3 3 6 6M9 3 3 9" stroke="#ccc"/></svg></button>
    <button aria-label="Security"><svg viewBox="0 0 12 12"><path d="M5.500 0 10.500 2v4c0 3-2 5-5 6-3-1-5-3-5-6V2z" fill="#2a9fd8"/><path d="m8.500 5.500 3.500 6.500H5z" fill="#f5b921"/><path d="M8.500 8v2" stroke="#222"/></svg></button>
    <button aria-label="Microphone"><svg viewBox="0 0 12 12"><rect x="4" y=".5" width="4" height="7" rx="2" fill="#8fb6d6" stroke="#4f7797"/><path d="M2 5.500c0 5 8 5 8 0M6 9.500V12" fill="none" stroke="#4f7797"/></svg></button>
  </div>
  <div class="ml-[9px] w-[18px] leading-[11px] text-center">ENG<br>TRQ</div>
  <svg class="ml-[11px] w-[12px] h-[12px]" viewBox="0 0 12 12"><path d="M7.500 1.500h-7v6.500h9V6M3 10.500h4M5 8v2.500M9.500 1.500v2M11.300 1.500v2M8.800 3.500h3v1.700h-3zM10.400 5v5.500H8" fill="none" stroke="#444" stroke-width=".9"/></svg>
  <svg class="ml-[4px] w-[12px] h-[11px]" viewBox="0 0 12 11"><path d="M.5 4v3h1.800L5 9.500v-8L2.300 4zM6.500 4c.7 1 .7 2 0 3M8 2.500c1.700 2 1.700 4 0 6M9.700 1.300c2 2.700 2 5.700 0 8.400" fill="none" stroke="#444" stroke-width=".9"/></svg>
  <div class="ml-[7px] w-[40px] leading-[11px] text-right whitespace-nowrap">4:05 PM<br>4/12/2026</div>
</footer>

<!-- Stream overlays -->
<div class="absolute left-[13px] top-[313px] flex items-center">
  <svg class="w-[20px] h-[28px] mr-[-3px]" viewBox="0 0 20 28"><ellipse cx="10" cy="24" rx="9.500" ry="3" fill="none" stroke="#d23a50"/><path d="M10.500 1C6 1 3.500 4 3.500 8c0 5 4.500 8 7 16 2.500-8 7-11 7-16 0-4-2.500-7-7-7z" fill="#d0102c"/><circle cx="10.500" cy="7.500" r="3.200" fill="#fff"/><path d="M9 9c1-2 2-2 3-3" stroke="#d0102c" fill="none"/></svg>
  <p class="font-['Liberation_Sans_Narrow','Liberation_Sans',sans-serif] font-bold text-[20px] leading-[24px] text-white whitespace-nowrap [text-shadow:1px_1px_1px_#222,0_0_1px_#777,0_0_2px_#aaa]">154 / 155</p>
</div>

<div class="absolute left-[815px] bottom-[1px] w-[260px] flex flex-col gap-[2px] font-['Roboto',sans-serif] font-bold text-[10px] leading-[16px] text-white [text-shadow:0_0_1px_#444,0_0_1px_#666,0_0_2px_#888] [&_svg]:inline-block [&_svg]:size-[10px] [&_svg]:align-[-1px] [&_b]:ml-[4px]">
  <p><svg><use href="#kick"/></svg><b class="text-[#1f56a8]">dynoxx</b> : A(1+r)^t miydi</p>
  <p><svg><use href="#kick"/></svg> <svg class="-ml-[2px]" viewBox="0 0 10 10"><rect width="10" height="10" rx="3" fill="#3b2a66"/><path d="M3 8V2h3a2 2 0 0 1 0 4H3" stroke="#b9a2f5" fill="none"/></svg><b class="text-[#8a3fd1]">lolhemad</b> : &nbsp;<svg class="ml-px" viewBox="0 0 12 12"><path d="M0 5c0-3 2-4 4-4 1 0 2 .5 2 .5S7 1 8 1c2.500 0 4 2 4 4s-1 5-1 5H1z" fill="#48b93a"/><circle cx="4" cy="4" r="1.200" fill="#123"/><circle cx="8.500" cy="4" r="1.200" fill="#123"/><path d="M0 8h12v4H0z" fill="#e8922a"/><path d="M3 7h6v3H3z" fill="#6fd04c"/></svg></p>
  <p class="whitespace-nowrap"><svg><use href="#kick"/></svg> <svg class="-ml-[2px]"><use href="#ribbonbadge"/></svg><b class="text-[#b3123c]">phagee</b> : basit faiz bildiğin yüzde bak. ana para x<br>faiz = 1 yıllık getirisi</p>
  <p class="whitespace-nowrap"><svg><use href="#kick"/></svg> <svg class="-ml-[2px]" viewBox="0 0 10 10"><path d="M5 0l4.500 2.500v5L5 10 .5 7.500v-5z" fill="#1e8fe0"/><path d="M5 5l4.500-2.500M5 5v5M5 5 .5 2.500" stroke="#8ad2ff"/></svg><b class="text-[#7fdc5a]">sakiyiit</b> : cevap anahtarı var mı bi baksana acaba</p>
  <p class="whitespace-nowrap"><svg><use href="#kick"/></svg> <svg class="-ml-[2px]"><use href="#ribbonbadge"/></svg><b class="text-[#b3123c]">phagee</b> : sonra onu da kaç yıl duracaksa onla<br>çarp</p>
</div>
</body>
</html>
